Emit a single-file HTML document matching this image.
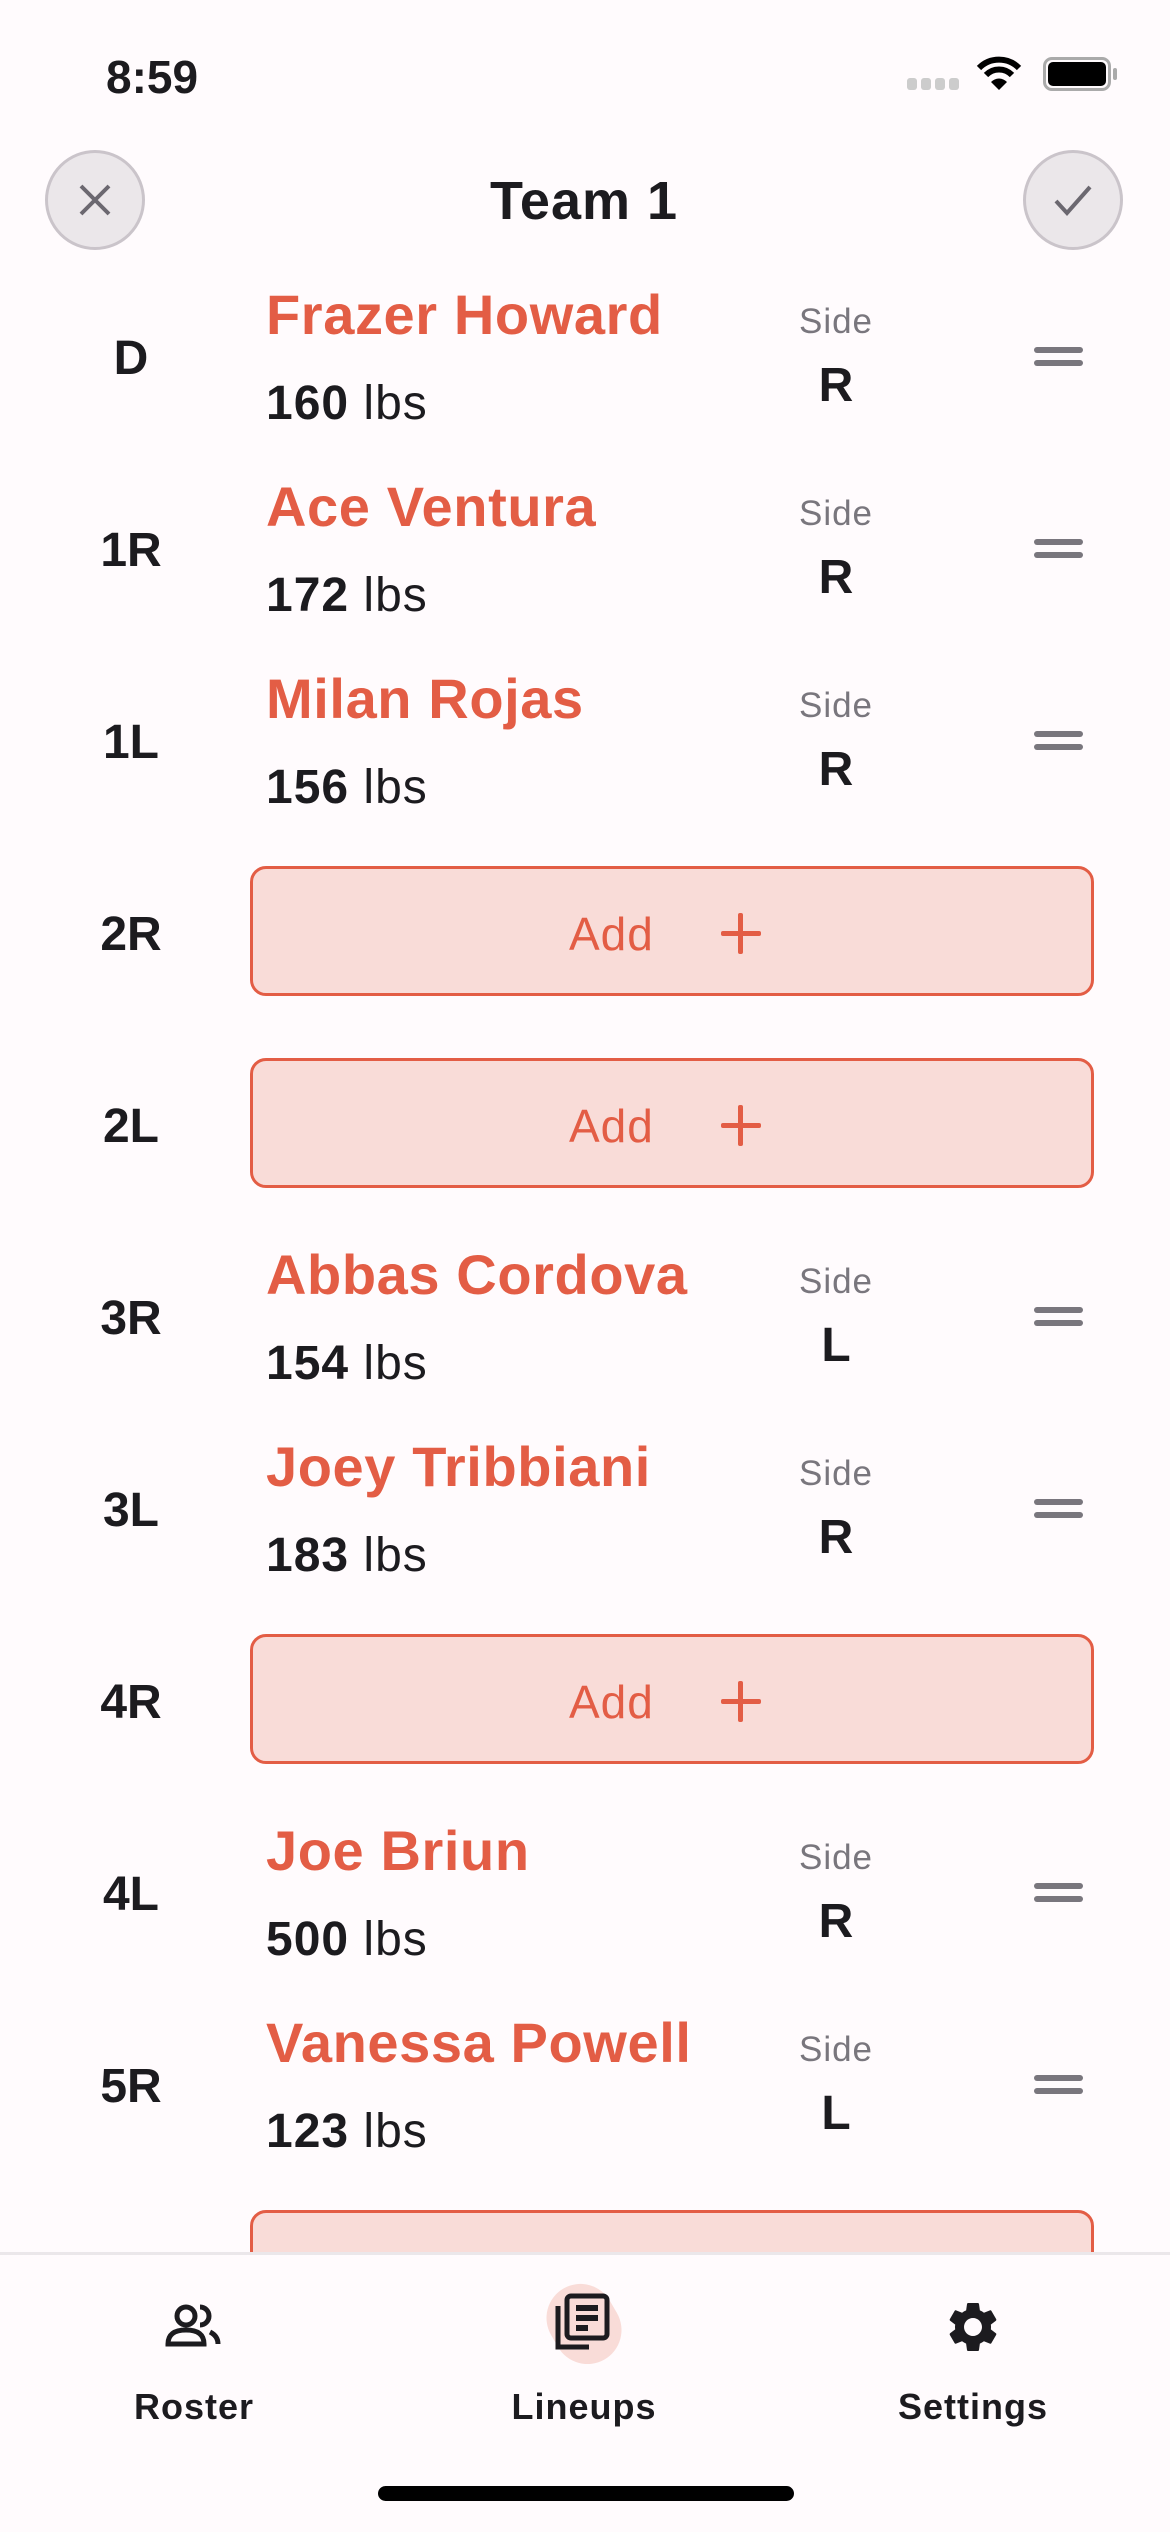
<!DOCTYPE html>
<html><head><meta charset="utf-8"><style>
*{margin:0;padding:0;box-sizing:border-box}
body{width:1170px;height:2532px;background:#fffbfd;font-family:"Liberation Sans",sans-serif;position:relative;overflow:hidden;color:#1c1b1f}
.a{position:absolute}
.pos{position:absolute;left:60px;width:142px;text-align:center;font-weight:bold;font-size:48px;margin-top:4px}
.name{position:absolute;left:266px;font-weight:bold;font-size:56px;color:#e35d45;letter-spacing:0.6px;white-space:nowrap}
.wt{position:absolute;left:266px;font-size:48px;letter-spacing:1px;white-space:nowrap;margin-top:8px}
.wt b{font-weight:bold}
.side{position:absolute;left:776px;width:120px;text-align:center;font-size:35px;color:#79767d;letter-spacing:1px;margin-top:2px}
.sv{position:absolute;left:776px;width:120px;text-align:center;font-size:48px;font-weight:bold;margin-top:2px}
.h{position:absolute;left:1034px;width:49px;height:6px;border-radius:3px;background:#79767d}
.add{position:absolute;left:250px;width:844px;height:130px;border:3px solid #e35d45;border-radius:16px;background:#f9dcd8}
.add span{position:absolute;left:316px;top:38px;font-size:46px;color:#e35d45;letter-spacing:1px}
.add i{position:absolute;left:468px;top:62px;width:40px;height:5px;background:#e35d45;border-radius:2px}
.add i:after{content:"";position:absolute;left:17px;top:-18px;width:5px;height:41px;background:#e35d45;border-radius:2px}
.tab{position:absolute;top:2386px;font-size:36px;font-weight:bold;letter-spacing:1px;width:260px;text-align:center}
</style></head><body>
<div class="a" style="left:106px;top:50px;font-size:46px;font-weight:bold">8:59</div>
<div class="a" style="left:907px;top:78px;width:10px;height:12px;border-radius:3px;background:#ccc;box-shadow:14px 0 #ccc,28px 0 #ccc,42px 0 #ccc"></div>
<svg class="a" style="left:976px;top:54px" width="46" height="38" viewBox="0 0 46 38"><path d="M3 14 A28 28 0 0 1 43 14" stroke="#000" stroke-width="6" fill="none"/><path d="M10 21 A18 18 0 0 1 36 21" stroke="#000" stroke-width="6" fill="none"/><path d="M23 36 L15 28 A11 11 0 0 1 31 28Z" fill="#000"/></svg>
<div class="a" style="left:1043px;top:57px;width:68px;height:34px;border:3px solid #aaa;border-radius:9px"></div>
<div class="a" style="left:1048px;top:62px;width:58px;height:24px;background:#000;border-radius:5px"></div>
<div class="a" style="left:1113px;top:68px;width:4px;height:12px;background:#aaa;border-radius:2px"></div>

<div class="a" style="left:45px;top:150px;width:100px;height:100px;border-radius:50%;background:#ebe7ea;border:3px solid #cac4ca"></div>
<svg class="a" style="left:78px;top:183px" width="34" height="34"><path d="M3 3L31 31M31 3L3 31" stroke="#6b6870" stroke-width="4"/></svg>
<div class="a" style="left:1023px;top:150px;width:100px;height:100px;border-radius:50%;background:#ebe7ea;border:3px solid #cac4ca"></div>
<svg class="a" style="left:1053px;top:183px" width="40" height="34"><path d="M3 18L14 30L37 4" stroke="#6b6870" stroke-width="4" fill="none"/></svg>
<div class="a" style="left:384px;top:170px;width:400px;text-align:center;font-size:54px;font-weight:bold;letter-spacing:1px">Team 1</div>

<div class="pos" style="top:327px">D</div><div class="name" style="top:282px">Frazer Howard</div><div class="wt" style="top:368px"><b>160</b> lbs</div><div class="side" style="top:300px">Side</div><div class="sv" style="top:356px">R</div><div class="h" style="top:347px"></div><div class="h" style="top:360px"></div>

<div class="pos" style="top:519px">1R</div><div class="name" style="top:474px">Ace Ventura</div><div class="wt" style="top:560px"><b>172</b> lbs</div><div class="side" style="top:492px">Side</div><div class="sv" style="top:548px">R</div><div class="h" style="top:539px"></div><div class="h" style="top:552px"></div>

<div class="pos" style="top:711px">1L</div><div class="name" style="top:666px">Milan Rojas</div><div class="wt" style="top:752px"><b>156</b> lbs</div><div class="side" style="top:684px">Side</div><div class="sv" style="top:740px">R</div><div class="h" style="top:731px"></div><div class="h" style="top:744px"></div>

<div class="pos" style="top:903px">2R</div><div class="add" style="top:866px"><span>Add</span><i></i></div>
<div class="pos" style="top:1095px">2L</div><div class="add" style="top:1058px"><span>Add</span><i></i></div>

<div class="pos" style="top:1287px">3R</div><div class="name" style="top:1242px">Abbas Cordova</div><div class="wt" style="top:1328px"><b>154</b> lbs</div><div class="side" style="top:1260px">Side</div><div class="sv" style="top:1316px">L</div><div class="h" style="top:1307px"></div><div class="h" style="top:1320px"></div>

<div class="pos" style="top:1479px">3L</div><div class="name" style="top:1434px">Joey Tribbiani</div><div class="wt" style="top:1520px"><b>183</b> lbs</div><div class="side" style="top:1452px">Side</div><div class="sv" style="top:1508px">R</div><div class="h" style="top:1499px"></div><div class="h" style="top:1512px"></div>

<div class="pos" style="top:1671px">4R</div><div class="add" style="top:1634px"><span>Add</span><i></i></div>

<div class="pos" style="top:1863px">4L</div><div class="name" style="top:1818px">Joe Briun</div><div class="wt" style="top:1904px"><b>500</b> lbs</div><div class="side" style="top:1836px">Side</div><div class="sv" style="top:1892px">R</div><div class="h" style="top:1883px"></div><div class="h" style="top:1896px"></div>

<div class="pos" style="top:2055px">5R</div><div class="name" style="top:2010px">Vanessa Powell</div><div class="wt" style="top:2096px"><b>123</b> lbs</div><div class="side" style="top:2028px">Side</div><div class="sv" style="top:2084px">L</div><div class="h" style="top:2075px"></div><div class="h" style="top:2088px"></div>

<div class="add" style="top:2210px"></div>

<div class="a" style="left:0;top:2252px;width:1170px;height:280px;background:#fffbfd;border-top:3px solid #ebe7ea"></div>
<svg class="a" style="left:164px;top:2302px" width="60" height="48" viewBox="0 0 60 48"><circle cx="22" cy="14" r="9" fill="none" stroke="#1c1b1f" stroke-width="5"/><path d="M4 42 Q4 28 22 28 Q40 28 40 42Z" fill="none" stroke="#1c1b1f" stroke-width="5"/><path d="M36 5 A9 9 0 0 1 36 23" fill="none" stroke="#1c1b1f" stroke-width="5"/><path d="M46 30 Q54 34 54 42" fill="none" stroke="#1c1b1f" stroke-width="5"/></svg>
<div class="a" style="left:543px;top:2290px;width:82px;height:68px;border-radius:34px;background:#f9dcd8;transform:rotate(60deg)"></div>
<svg class="a" style="left:553px;top:2292px" width="60" height="60" viewBox="0 0 60 60"><rect x="14" y="4" width="40" height="42" rx="4" fill="none" stroke="#1c1b1f" stroke-width="5"/><path d="M5 14V55H36" fill="none" stroke="#1c1b1f" stroke-width="5"/><rect x="23" y="13" width="22" height="6" fill="#1c1b1f"/><rect x="23" y="23" width="22" height="6" fill="#1c1b1f"/><rect x="23" y="33" width="12" height="6" fill="#1c1b1f"/></svg>
<svg class="a" style="left:943px;top:2297px" width="60" height="60" viewBox="0 0 24 24"><path fill="#1c1b1f" d="M19.14 12.94c.04-.3.06-.61.06-.94 0-.32-.02-.64-.07-.94l2.030-1.58a.49.49 0 0 0 .12-.61l-1.92-3.32a.488.488 0 0 0-.59-.22l-2.39.96c-.5-.38-1.030-.7-1.62-.94l-.36-2.54a.484.484 0 0 0-.48-.41h-3.84c-.24 0-.43.17-.47.41l-.36 2.54c-.59.24-1.13.57-1.62.94l-2.39-.96c-.22-.08-.47 0-.59.22L2.74 8.87c-.12.21-.08.47.12.61l2.030 1.58c-.05.3-.09.63-.09.94s.02.64.07.94l-2.030 1.58a.49.49 0 0 0-.12.61l1.92 3.32c.12.22.37.29.59.22l2.39-.96c.5.38 1.030.7 1.62.94l.36 2.54c.05.24.24.41.48.41h3.84c.24 0 .44-.17.47-.41l.36-2.54c.59-.24 1.13-.56 1.62-.94l2.39.96c.22.08.47 0 .59-.22l1.92-3.32c.12-.22.07-.47-.12-.61l-2.010-1.58zM12 15.6c-1.98 0-3.6-1.62-3.6-3.6s1.62-3.6 3.6-3.6 3.6 1.62 3.6 3.6-1.62 3.6-3.6 3.6z"/></svg>
<div class="tab" style="left:64px">Roster</div>
<div class="tab" style="left:454px">Lineups</div>
<div class="tab" style="left:843px">Settings</div>
<div class="a" style="left:378px;top:2486px;width:416px;height:15px;border-radius:8px;background:#000"></div>
</body></html>
